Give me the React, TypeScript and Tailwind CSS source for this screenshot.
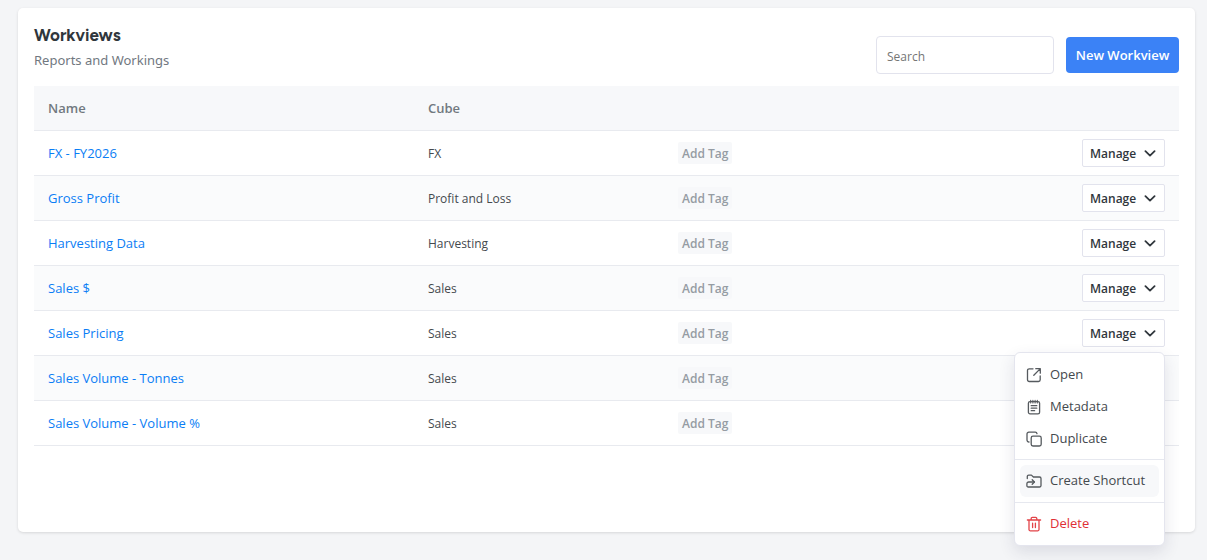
import { useState, type ReactNode } from "react";

type Workview = { name: string; cube: string };

const workviews: Workview[] = [
  { name: "FX - FY2026", cube: "FX" },
  { name: "Gross Profit", cube: "Profit and Loss" },
  { name: "Harvesting Data", cube: "Harvesting" },
  { name: "Sales $", cube: "Sales" },
  { name: "Sales Pricing", cube: "Sales" },
  { name: "Sales Volume - Tonnes", cube: "Sales" },
  { name: "Sales Volume - Volume %", cube: "Sales" },
];

function Icon({ children }: { children: ReactNode }) {
  return (
    <svg
      className="size-4 shrink-0 opacity-90"
      viewBox="0 0 16 16"
      fill="none"
      stroke="currentColor"
      strokeWidth="1.3"
      strokeLinecap="round"
      strokeLinejoin="round"
      aria-hidden="true"
    >
      {children}
    </svg>
  );
}

function OpenIcon() {
  return (
    <Icon>
      <path d="M7 1.8H3.2A1.7 1.7 0 0 0 1.5 3.5v9.3a1.7 1.7 0 0 0 1.7 1.7h9.3a1.7 1.7 0 0 0 1.7-1.7V9" />
      <path d="M9.8 1.7h4.5v4.5M14.1 1.9 7.8 8.2" />
    </Icon>
  );
}

function MetadataIcon() {
  return (
    <Icon>
      <rect x="2.4" y="2.6" width="11.2" height="12.2" rx="1.6" />
      <path d="M4.7 1.2v2.8M6.9 1.2v2.8M9.1 1.2v2.8M11.3 1.2v2.8" strokeWidth="1.1" />
      <path d="M5.2 6.7h5.6M5.2 9.2h5.6M5.2 11.7h3.4" />
    </Icon>
  );
}

function DuplicateIcon() {
  return (
    <Icon>
      <rect x="5.2" y="5.2" width="10" height="9.8" rx="1.8" />
      <path d="M3 11A1.9 1.9 0 0 1 1 9.1V3A1.8 1.8 0 0 1 2.8 1.2h6.4a1.8 1.8 0 0 1 1.8 1.5" />
    </Icon>
  );
}

function ShortcutIcon() {
  return (
    <Icon>
      <path d="M1.3 5.6V3.5a1.4 1.4 0 0 1 1.4-1.4h2.7l2 1.9h6.1A1.5 1.5 0 0 1 15 5.5v7a1.5 1.5 0 0 1-1.5 1.5H2.2A1.3 1.3 0 0 1 .9 12.700v-1.900A1.800 1.800 0 0 1 2.700 9h5.600" />
      <path d="M6.200 6.800 8.400 9 6.200 11.200" />
    </Icon>
  );
}

function DeleteIcon() {
  return (
    <Icon>
      <path d="M1.4 4h13.2M5.2 4V2.5a1.2 1.2 0 0 1 1.2-1.2h3.2a1.2 1.2 0 0 1 1.2 1.2V4M3 4v9.4a1.4 1.4 0 0 0 1.4 1.4h7.2a1.4 1.4 0 0 0 1.4-1.4V4M6.6 7.2v4.4M9.4 7.2v4.4" />
    </Icon>
  );
}

function MenuItem({ icon, label, tone }: { icon: ReactNode; label: string; tone?: "active" | "danger" }) {
  const look =
    tone === "danger"
      ? "text-[#e02f35] hover:bg-[#f7f8fa]"
      : tone === "active"
        ? "bg-[#f7f8fa] text-[#44494e]"
        : "text-[#44494e] hover:bg-[#f7f8fa]";
  return (
    <button
      type="button"
      role="menuitem"
      className={`flex h-8 w-full items-center gap-2 rounded-md px-1.5 text-left text-[13px] ${look}`}
    >
      {icon}
      {label}
    </button>
  );
}

function ManageMenu() {
  return (
    <div
      role="menu"
      className="absolute top-full right-0 z-10 mt-[5px] w-[151px] rounded-md border border-[#e4e5ee] bg-white shadow-[0_6px_16px_rgba(40,45,80,0.12)]"
    >
      <div className="px-[5px] pt-1.5 pb-1">
        <MenuItem icon={<OpenIcon />} label="Open" />
        <MenuItem icon={<MetadataIcon />} label="Metadata" />
        <MenuItem icon={<DuplicateIcon />} label="Duplicate" />
      </div>
      <div className="border-y border-[#e6e8ef] px-[5px] py-[5px]">
        <MenuItem icon={<ShortcutIcon />} label="Create Shortcut" tone="active" />
      </div>
      <div className="px-[5px] py-[5px]">
        <MenuItem icon={<DeleteIcon />} label="Delete" tone="danger" />
      </div>
    </div>
  );
}

export default function App() {
  const [openRow, setOpenRow] = useState<number | null>(4);
  const [query, setQuery] = useState("");

  return (
    <div className="min-h-screen bg-[#f4f5f7] pt-2 pr-3 pb-7 pl-[18px] font-['Segoe_UI','Open_Sans',sans-serif] text-[13px] text-[#44494e]">
      <main className="rounded-[5px] bg-white px-4 pt-4 pb-[86px] shadow-[0_1px_3px_rgba(0,0,0,0.12)]">
        <header className="flex items-start justify-between pb-3">
          <div>
            <h1 className="font-['Figtree','Lato',sans-serif] text-[17px] leading-[22px] font-bold text-[#30363c]">Workviews</h1>
            <p className="mt-0.5 font-['Noto_Sans',sans-serif] text-[13px] leading-6 text-[#71787f]">Reports and Workings</p>
          </div>
          <div className="flex items-center gap-3 pt-3">
            <input
              type="search"
              aria-label="Search"
              placeholder="Search"
              value={query}
              onChange={(e) => setQuery(e.target.value)}
              className="h-[38px] w-[178px] rounded border border-[#e2e3ed] px-2.5 pt-0.5 text-[12px] placeholder:text-[#757575]"
            />
            <button type="button" className="h-9 w-[113px] rounded bg-[#3b82f6] pt-0.5 text-[13px] font-semibold whitespace-nowrap text-white">
              New Workview
            </button>
          </div>
        </header>

        <table className="w-full table-fixed text-left">
          <thead>
            <tr className="h-11 border-b border-[#e8eaef] bg-[#f7f8fa] text-[#71787f]">
              <th className="w-[380px] px-3.5 pt-0.5 font-semibold">Name</th>
              <th className="w-[250px] px-3.5 pt-0.5 font-semibold">Cube</th>
              <th aria-label="Tags" />
              <th aria-label="Actions" className="w-[120px]" />
            </tr>
          </thead>
          <tbody>
            {workviews
              .map((view, index) => ({ ...view, index }))
              .filter((view) => view.name.toLowerCase().includes(query.toLowerCase()))
              .map((view) => (
                <tr key={view.name} className="h-[45px] border-b border-[#e8eaef] even:bg-[#fafbfc]">
                  <td className="px-3.5 pt-0.5">
                    <a href="#" className="text-[#0a7df5]">
                      {view.name}
                    </a>
                  </td>
                  <td className="px-3.5 pt-0.5 text-[12px]">{view.cube}</td>
                  <td className="px-3.5">
                    <button
                      type="button"
                      className="block h-[22px] rounded-xs bg-[#f7f8fa] px-1 pt-0.5 text-[12px] font-semibold text-[#959ca3]"
                    >
                      Add Tag
                    </button>
                  </td>
                  <td className="px-3.5">
                    <div className="relative ml-auto w-[83px]">
                      <button
                        type="button"
                        aria-haspopup="menu"
                        aria-expanded={openRow === view.index}
                        onClick={() => setOpenRow(openRow === view.index ? null : view.index)}
                        className="flex h-7 w-full items-center justify-between rounded-xs border border-[#e2e3ed] bg-white pt-0.5 pr-2 pl-[7px] text-[12px] font-semibold text-[#30363c]"
                      >
                        Manage
                        <svg
                          className="h-2.5 w-3"
                          viewBox="0 0 12 10"
                          fill="none"
                          stroke="currentColor"
                          strokeWidth="1.8"
                          strokeLinecap="round"
                          strokeLinejoin="round"
                          aria-hidden="true"
                        >
                          <path d="M1.4 2.2 6 6.6 10.6 2.2" />
                        </svg>
                      </button>
                      {openRow === view.index && <ManageMenu />}
                    </div>
                  </td>
                </tr>
              ))}
          </tbody>
        </table>
      </main>
    </div>
  );
}
